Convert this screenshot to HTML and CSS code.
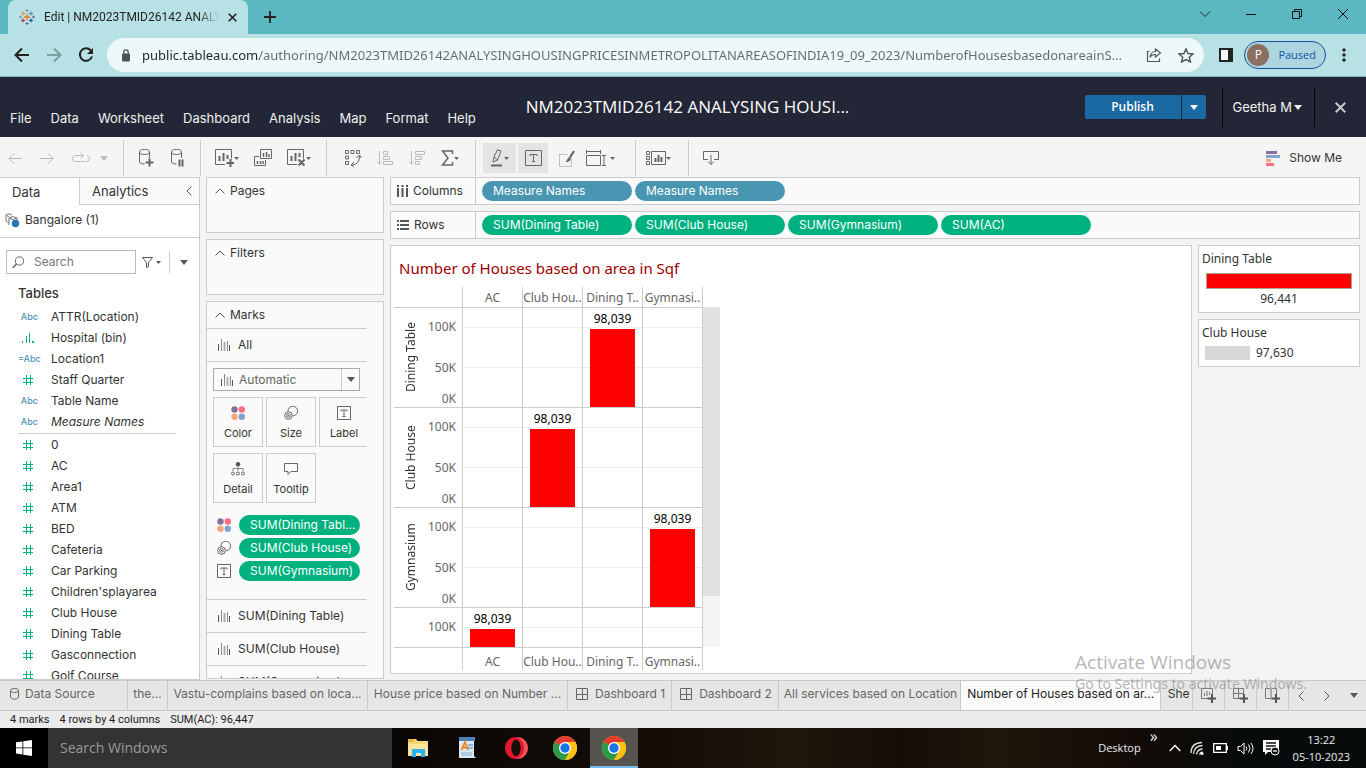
FILE: index.html
```html
<!DOCTYPE html>
<html lang="en">
<head>
<meta charset="utf-8">
<title>Edit | NM2023TMID26142 ANALYSING HOUSING PRICES</title>
<link rel="stylesheet" href="styles.css">
</head>
<body>
<svg class="defs" aria-hidden="true">
  <symbol id="hash" viewBox="0 0 12 12"><path d="M1 4.500h10M1 8.500h10M4.500 1v10M8.500 1v10" fill="none" stroke="#00b180"/></symbol>
  <symbol id="caret" viewBox="0 0 8 5"><path d="M0 0h8L4 5z" fill="currentColor"/></symbol>
  <symbol id="up" viewBox="0 0 10 6"><path d="M.5 5.500 5 1l4.500 4.500" fill="none" stroke="#555"/></symbol>
  <symbol id="bars" viewBox="0 0 14 12"><path d="M1.500 5v7M12.500 6v6" stroke="#555"/><path d="M4.500 0v12M10.500 2v10" stroke="#888"/><path d="M7.500 3v9" stroke="#aaa" stroke-width="2"/></symbol>
  <symbol id="dots" viewBox="0 0 14 14"><circle cx="3.500" cy="3.500" r="3.200" fill="#8a6f9b"/><circle cx="10.800" cy="3.500" r="3.200" fill="#fc6f81"/><circle cx="3.500" cy="10.800" r="3.200" fill="#f5a67b"/><circle cx="10.800" cy="10.800" r="3.200" fill="#81a4cd"/></symbol>
  <symbol id="size" viewBox="0 0 14 14"><g fill="none" stroke="#666"><path d="M4 5.500A4.800 4.800 0 1 1 9 9.800"/><circle cx="4.500" cy="9.500" r="3.800"/><circle cx="4.500" cy="9.500" r="1.800"/><path d="m3 8 3 3"/></g></symbol>
  <symbol id="tbox" viewBox="0 0 14 14"><path d="M.5.5h13v13H.5z" fill="none" stroke="#666"/><path d="M4 5.500V4h6v1.500M7 4v6M5.500 10.500h3" fill="none" stroke="#666"/></symbol>
  <symbol id="dash" viewBox="0 0 12 12"><path d="M.5.5h11v11H.5zM6.500.5v11M.5 6.500h11" fill="none" stroke="#666"/></symbol>
  <symbol id="chrome" viewBox="0 0 24 24"><circle cx="12" cy="12" r="12" fill="#fbc116"/><path d="M12 12 1.600 6A12 12 0 0 1 22.400 6z" fill="#e33b2e"/><path d="M12 12 1.600 6A12 12 0 0 0 12 24l5-9z" fill="#2a9b48"/><path d="M12 6h10.400A12 12 0 0 1 12 24l5.200-9z" fill="#fbc116"/><circle cx="12" cy="12" r="6" fill="#fff"/><circle cx="12" cy="12" r="4.700" fill="#1a73e8"/></symbol>
</svg>

<header class="browser">
  <div class="tabstrip">
    <div class="btab">
      <svg width="16" height="16" viewBox="0 0 16 16" fill="none"><path d="M8 5v6M5 8h6" stroke="#e8762d" stroke-width="1.300"/><path d="M4 2.500v4M2 4.500h4" stroke="#eb912c"/><path d="M12 2.500v4M10 4.500h4" stroke="#59879b"/><path d="M4 9.500v4M2 11.500h4" stroke="#c72035"/><path d="M12 9.500v4M10 11.500h4" stroke="#1f457e"/><path d="M8 0v3M6.500 1.500h3M1.500 6.500v3M0 8h3" stroke="#7199a6"/><path d="M8 13v3M6.500 14.500h3M14.500 6.500v3M13 8h3" stroke="#5b6591"/></svg>
      <span class="btab-title">Edit | NM2023TMID26142 ANALYSING</span>
      <button class="plain" aria-label="Close tab"><svg width="9" height="9" viewBox="0 0 9 9"><path d="m.7.7 7.600 7.600M8.300.7.7 8.300" stroke="#222" stroke-width="1.600"/></svg></button>
    </div>
    <button class="plain newtab" aria-label="New tab"><svg width="12" height="12" viewBox="0 0 12 12"><path d="M6 0v12M0 6h12" stroke="#222" stroke-width="1.800"/></svg></button>
    <div class="winctl">
      <button class="plain" aria-label="Search tabs"><svg width="12" height="12" viewBox="0 0 12 12"><path d="m1 3.500 5 5 5-5" fill="none" stroke="#222"/></svg></button>
      <button class="plain" aria-label="Minimize"><svg width="12" height="12" viewBox="0 0 12 12"><path d="M1 6.500h10" stroke="#111"/></svg></button>
      <button class="plain" aria-label="Restore"><svg width="12" height="12" viewBox="0 0 12 12"><path d="M1.500 3.500h7v7h-7zM3.500 3V1.500h7v7H9" fill="none" stroke="#111"/></svg></button>
      <button class="plain" aria-label="Close"><svg width="12" height="12" viewBox="0 0 12 12"><path d="m1 1 10 10M11 1 1 11" stroke="#111"/></svg></button>
    </div>
  </div>
  <div class="addressbar">
    <button class="plain" aria-label="Back"><svg width="16" height="16" viewBox="0 0 16 16"><path d="M15 8H2M8 1.500 1.500 8 8 14.500" fill="none" stroke="#222" stroke-width="2"/></svg></button>
    <button class="plain" aria-label="Forward"><svg width="16" height="16" viewBox="0 0 16 16"><path d="M1 8h13M8 1.500 14.500 8 8 14.500" fill="none" stroke="#7e9da0" stroke-width="2"/></svg></button>
    <button class="plain" aria-label="Reload"><svg width="16" height="16" viewBox="0 0 16 16"><path d="M12.800 3.500A6.200 6.200 0 1 0 14 9.500" fill="none" stroke="#222" stroke-width="2"/><path d="M15 1v6H9z" fill="#222"/></svg></button>
    <div class="url">
      <svg width="10" height="13" viewBox="0 0 10 13"><rect x="1" y="4.500" width="8" height="8" rx="1" fill="#4d5156"/><path d="M2.800 5V3a2.200 2.200 0 0 1 4.400 0v2" fill="none" stroke="#4d5156" stroke-width="1.300"/></svg>
      <input type="text" aria-label="Address" value="public.tableau.com/authoring/NM2023TMID26142ANALYSINGHOUSINGPRICESINMETROPOLITANAREASOFINDIA19_09_2023/NumberofHousesbasedonareainS...">
      <button class="plain" aria-label="Share"><svg width="16" height="14" viewBox="0 0 16 14"><path d="M3.500 3.500h-2v10h12v-3M9.500 1l5 4-5 4V6.500C7 6.500 5 7.500 4 9.500c.5-3.500 2.500-6 5.500-6z" fill="none" stroke="#555" stroke-width="1.200"/></svg></button>
      <button class="plain" aria-label="Bookmark"><svg width="16" height="15" viewBox="0 0 16 15"><path d="m8 1 2 4.500 5 .5-3.700 3.300L12.400 14 8 11.500 3.600 14l1.100-4.700L1 6l5-.5z" fill="none" stroke="#555" stroke-width="1.500"/></svg></button>
    </div>
    <button class="plain" aria-label="Side panel"><svg width="14" height="14" viewBox="0 0 14 14"><path d="M1 1h12v12H1z" fill="#edf8f9" stroke="#222" stroke-width="2"/><path d="M9 1h5v12H9z" fill="#222"/></svg></button>
    <button class="paused"><span class="avatar">P</span>Paused</button>
    <button class="plain" aria-label="Menu"><svg width="4" height="14" viewBox="0 0 4 14" fill="#222"><circle cx="2" cy="2" r="1.700"/><circle cx="2" cy="7" r="1.700"/><circle cx="2" cy="12" r="1.700"/></svg></button>
  </div>
</header>

<div class="appbar">
  <nav class="menu"><a href="#">File</a><a href="#">Data</a><a href="#">Worksheet</a><a href="#">Dashboard</a><a href="#">Analysis</a><a href="#">Map</a><a href="#">Format</a><a href="#">Help</a></nav>
  <h1>NM2023TMID26142 ANALYSING HOUSI...</h1>
  <div class="account">
    <button class="publish">Publish</button><button class="publish-more" aria-label="Publish options"><svg width="8" height="5"><use href="#caret"/></svg></button>
    <button class="user">Geetha M <svg width="8" height="5"><use href="#caret"/></svg></button>
    <button class="plain close" aria-label="Close"><svg width="11" height="11" viewBox="0 0 11 11"><path d="m.7.7 9.600 9.600M10.300.7.7 10.300" stroke="#c8c8cc" stroke-width="2"/></svg></button>
  </div>
</div>

<div class="tools">
  <div class="tg history">
    <button aria-label="Undo"><svg width="14" height="13" viewBox="0 0 14 13"><path d="M14 6.500H1M6.500 1 1 6.500 6.500 12"/></svg></button>
    <button aria-label="Redo"><svg width="14" height="13" viewBox="0 0 14 13"><path d="M0 6.500h13M7.500 1 13 6.500 7.500 12"/></svg></button>
    <button aria-label="Replay"><svg width="18" height="12" viewBox="0 0 18 12"><path d="M13 9.500H3.500a3 3 0 0 1 0-6H11M8.500.5l3 3-3 3M15 3.500a3 3 0 0 1-1 6"/></svg></button>
    <button aria-label="Replay options"><svg width="8" height="5"><use href="#caret"/></svg></button>
  </div>
  <div class="tg data">
    <button aria-label="New data source"><svg width="16" height="20" viewBox="0 0 16 20"><ellipse cx="6.500" cy="4" rx="5" ry="2.500"/><path d="M1.500 4v10.500q1 1.500 5 1.500M11.500 4v6"/><path d="M11.500 10.500v8M7.500 14.500h8" stroke-width="2"/></svg></button>
    <button aria-label="Pause updates"><svg width="16" height="20" viewBox="0 0 16 20"><ellipse cx="6.500" cy="4" rx="5" ry="2.500"/><path d="M1.500 4v10.500q1 1.500 5 1.500M11.500 4v6"/><path d="M9.500 11.500v7M12.500 11.500v7" stroke-width="2"/></svg></button>
  </div>
  <div class="tg sheet">
    <button aria-label="New worksheet"><svg width="19" height="18" viewBox="0 0 19 18"><path d="M10 15.500H.5V.5h16v9"/><path d="M4.500 7v5M8.500 4v8M12.500 6v4M15.500 10v8M11.500 14h8" stroke-width="2"/></svg><svg class="c" width="5" height="3"><use href="#caret"/></svg></button>
    <button aria-label="Duplicate"><svg width="18" height="18" viewBox="0 0 18 18"><path d="M6.500.5h11v9h-11zM5 7.500H.5v9h11V11"/><path d="M9.500 4v4M12.500 3v5M15 5v3M3.500 12v3M6.500 12v3M9 12v3" stroke-width="1.500"/></svg></button>
    <button aria-label="Clear sheet"><svg width="19" height="18" viewBox="0 0 19 18"><path d="M10 15.500H.5V.5h16v9"/><path d="M4.500 7v5M8.500 4v8M12.500 4v4m-1 2.500 6 6m0-6-6 6" stroke-width="2"/></svg><svg class="c" width="5" height="3"><use href="#caret"/></svg></button>
  </div>
  <div class="tg arrange">
    <button aria-label="Swap rows and columns"><svg width="17" height="18" viewBox="0 0 17 18"><path d="M.5 1.500h3v3h-3zM6 1.500h3v3H6zM11.500 1.500h3v3h-3zM.5 7h3v3h-3zM.5 12.500h3v3h-3zM6.500 16q8 0 8-9M9 13l-3 3 3 2M11.500 9l3-3 2 3"/></svg></button>
    <button class="off" aria-label="Sort ascending"><svg width="17" height="16" viewBox="0 0 17 16"><path d="M2.500 1v13M.5 11.500l2 3 2-3M6.500 1.500h4v3h-4zM6.500 6.500h6v3h-6zM6.500 11.500h9v3h-9z"/></svg></button>
    <button class="off" aria-label="Sort descending"><svg width="17" height="16" viewBox="0 0 17 16"><path d="M2.500 1v13M.5 11.500l2 3 2-3M6.500 1.500h9v3h-9zM6.500 6.500h6v3h-6zM6.500 11.500h4v3h-4z"/></svg></button>
    <button aria-label="Totals"><svg width="13" height="16" viewBox="0 0 13 16"><path d="M11.500 4V1h-10L7 8l-5.500 7h10v-3" stroke-width="1.500"/></svg><svg class="c" width="5" height="3"><use href="#caret"/></svg></button>
  </div>
  <div class="tg format">
    <button class="on" aria-label="Highlight"><svg width="14" height="18" viewBox="0 0 14 18"><path d="M7.500.8 11 2 7.500 11 3 13l1-5zM4 8l3.500 3"/><path d="M1 16.500h11" stroke-width="2"/></svg><svg class="c" width="5" height="3"><use href="#caret"/></svg></button>
    <button class="on" aria-label="Show mark labels"><svg width="17" height="16" viewBox="0 0 17 16"><path d="M.5.5h16v15H.5z"/><path d="M5 6V4.500h7V6M8.500 4.500V11M7 11.500h3"/></svg></button>
    <button aria-label="Format workbook"><svg width="16" height="17" viewBox="0 0 16 17"><path class="sel-area" d="M.5 4.500h8M.5 4.500v12h12V9"/><path d="m15 1-5 8" stroke-width="2.200"/><path d="m9.500 8-2 4 4-2z" fill="#666"/></svg></button>
    <button aria-label="Fit"><svg width="20" height="17" viewBox="0 0 20 17"><path d="M.5 0v4M14.500 0v4M.5 1.500h14M.5 5.500h14v10H.5zM16 5.500h4M16 15.500h4M18 5.500v10"/></svg><svg class="c" width="5" height="3"><use href="#caret"/></svg></button>
  </div>
  <div class="tg cards">
    <button aria-label="Show cards"><svg width="20" height="15" viewBox="0 0 20 15"><path d="M5.500.5h14v13h-14zM.5.5h3v3h-3zM.5 5.500h3v3h-3zM.5 10.500h3v3h-3z"/><path d="M9.500 7v4M12.500 4v7M15.500 6v5" stroke-width="2"/></svg><svg class="c" width="5" height="3"><use href="#caret"/></svg></button>
  </div>
  <div class="tg download">
    <button aria-label="Download"><svg width="16" height="16" viewBox="0 0 16 16"><path d="M5 9.500H.5v-8h15v8H11M8 5v9.500M5 11.500l3 3 3-3"/></svg></button>
  </div>
  <button class="showme"><svg width="14" height="15" viewBox="0 0 14 15"><path d="M0 0h11v3H0z" fill="#8a6f9b"/><path d="M0 4h14v3H0z" fill="#81a4cd"/><path d="M0 8h5v3H0z" fill="#f5a67b"/><path d="M0 12h8v3H0z" fill="#fc6f81"/></svg>Show Me</button>
</div>

<div class="workspace">
  <aside class="datapane">
    <div class="panetabs"><button class="sel">Data</button><button class="ana">Analytics <svg width="6" height="10" viewBox="0 0 6 10"><path d="M5.500.5 1 5l4.500 4.500" fill="none" stroke="#555"/></svg></button></div>
    <div class="source"><svg width="15" height="15" viewBox="0 0 15 15"><path d="M1 2v6q1 1.500 3 1.500M1 2q3-2.500 6 0M1 2q1.500 1.500 3 1.500M4 12V5q4-3 8 0v3M4 5q4 3 8 0" fill="none" stroke="#777"/><circle cx="10.500" cy="10.500" r="3.700" fill="#2277b5"/></svg>Bangalore (1)</div>
    <div class="searchrow">
      <label class="search"><svg width="13" height="13" viewBox="0 0 13 13"><circle cx="7.500" cy="5" r="4.200" fill="none" stroke="#666"/><path d="M4.500 8 .7 11.800" stroke="#666" stroke-width="1.500"/></svg><input type="text" placeholder="Search" aria-label="Search fields"></label>
      <button class="plain filter" aria-label="Filter fields"><svg width="11" height="11" viewBox="0 0 11 11"><path d="M.5.5h10L6.500 5.500v4l-2 1v-5z" fill="none" stroke="#555"/></svg><svg width="5" height="3"><use href="#caret"/></svg></button>
      <button class="plain view" aria-label="View options"><svg width="8" height="5"><use href="#caret"/></svg></button>
    </div>
    <h2>Tables</h2>
    <ul class="fields">
      <li><i class="abc">Abc</i>ATTR(Location)</li>
      <li><svg width="14" height="10" viewBox="0 0 14 10"><path d="M1.500 8v2M5.500 3v7M8.500 0v10M12.500 8v2M11.500 8v2" stroke="#00b180"/></svg>Hospital (bin)</li>
      <li><i class="abc">=Abc</i>Location1</li>
      <li><svg width="12" height="12"><use href="#hash"/></svg>Staff Quarter</li>
      <li><i class="abc">Abc</i>Table Name</li>
      <li class="it"><i class="abc">Abc</i>Measure Names</li>
    </ul>
    <ul class="fields measures">
      <li><svg width="12" height="12"><use href="#hash"/></svg>0</li>
      <li><svg width="12" height="12"><use href="#hash"/></svg>AC</li>
      <li><svg width="12" height="12"><use href="#hash"/></svg>Area1</li>
      <li><svg width="12" height="12"><use href="#hash"/></svg>ATM</li>
      <li><svg width="12" height="12"><use href="#hash"/></svg>BED</li>
      <li><svg width="12" height="12"><use href="#hash"/></svg>Cafeteria</li>
      <li><svg width="12" height="12"><use href="#hash"/></svg>Car Parking</li>
      <li><svg width="12" height="12"><use href="#hash"/></svg>Children'splayarea</li>
      <li><svg width="12" height="12"><use href="#hash"/></svg>Club House</li>
      <li><svg width="12" height="12"><use href="#hash"/></svg>Dining Table</li>
      <li><svg width="12" height="12"><use href="#hash"/></svg>Gasconnection</li>
      <li><svg width="12" height="12"><use href="#hash"/></svg>Golf Course</li>
    </ul>
  </aside>

  <div class="shelves">
    <section class="card"><h3><svg width="10" height="6"><use href="#up"/></svg>Pages</h3></section>
    <section class="card"><h3><svg width="10" height="6"><use href="#up"/></svg>Filters</h3></section>
    <section class="card marks">
      <h3><svg width="10" height="6"><use href="#up"/></svg>Marks</h3>
      <div class="marks-body">
        <div class="mrow"><svg width="14" height="12"><use href="#bars"/></svg>All</div>
        <div class="marktype"><svg class="lead" width="14" height="12"><use href="#bars"/></svg><select aria-label="Mark type"><option>Automatic</option></select><span class="drop"><svg width="8" height="5"><use href="#caret"/></svg></span></div>
        <div class="encodings">
          <button><svg width="14" height="14"><use href="#dots"/></svg>Color</button>
          <button><svg width="14" height="14"><use href="#size"/></svg>Size</button>
          <button><svg width="14" height="14"><use href="#tbox"/></svg>Label</button>
          <button><svg width="14" height="14" viewBox="0 0 14 14"><circle cx="7" cy="2.200" r="2.200" fill="#555"/><path d="M7 4v5M2 9V6.500h10V9" fill="none" stroke="#888"/><g fill="none" stroke="#666"><circle cx="2" cy="11.500" r="1.500"/><circle cx="7" cy="11.500" r="1.500"/><circle cx="12" cy="11.500" r="1.500"/></g></svg>Detail</button>
          <button><svg width="14" height="14" viewBox="0 0 14 14"><path d="M.5 1.500h13v8H7l-3 3v-3H.5z" fill="none" stroke="#666"/></svg>Tooltip</button>
        </div>
        <div class="encoded"><svg width="14" height="14"><use href="#dots"/></svg><button class="pill green">SUM(Dining Tabl...</button></div>
        <div class="encoded"><svg width="14" height="14"><use href="#size"/></svg><button class="pill green">SUM(Club House)</button></div>
        <div class="encoded"><svg width="14" height="14"><use href="#tbox"/></svg><button class="pill green">SUM(Gymnasium)</button></div>
        <div class="layers">
          <div class="mrow"><svg width="14" height="12"><use href="#bars"/></svg>SUM(Dining Table)</div>
          <div class="mrow"><svg width="14" height="12"><use href="#bars"/></svg>SUM(Club House)</div>
          <div class="mrow"><svg width="14" height="12"><use href="#bars"/></svg>SUM(Gymnasium)</div>
        </div>
      </div>
    </section>
  </div>

  <main>
    <div class="shelf"><span class="shelfname"><svg width="11" height="12" viewBox="0 0 11 12"><path d="M1 0v2M5.500 0v2M10 0v2M1 3v9M5.500 3v9M10 3v9" stroke="#555" stroke-width="2"/></svg>Columns</span>
      <button class="pill blue">Measure Names</button><button class="pill blue">Measure Names</button></div>
    <div class="shelf"><span class="shelfname"><svg width="12" height="11" viewBox="0 0 12 11"><path d="M0 1h2M0 5h2M0 9h2M3 1h9M3 5h9M3 9h9" stroke="#555" stroke-width="2"/></svg>Rows</span>
      <button class="pill green">SUM(Dining Table)</button><button class="pill green">SUM(Club House)</button><button class="pill green">SUM(Gymnasium)</button><button class="pill green">SUM(AC)</button></div>
    <div class="vizrow">
      <section class="viz">
        <h2>Number of Houses based on area in Sqf</h2>
        <div class="chart">
          <div class="plot">
            <div class="row head"><div></div><div>AC</div><div>Club Hou..</div><div>Dining T..</div><div>Gymnasi..</div></div>
            <div class="row"><div class="axis"><span class="rl">Dining Table</span><span class="ticks"><b>100K</b><b>50K</b><b>0K</b></span></div><div></div><div></div><div>98,039<i class="bar"></i></div><div></div></div>
            <div class="row"><div class="axis"><span class="rl">Club House</span><span class="ticks"><b>100K</b><b>50K</b><b>0K</b></span></div><div></div><div>98,039<i class="bar"></i></div><div></div><div></div></div>
            <div class="row"><div class="axis"><span class="rl">Gymnasium</span><span class="ticks"><b>100K</b><b>50K</b><b>0K</b></span></div><div></div><div></div><div></div><div>98,039<i class="bar"></i></div></div>
            <div class="row part"><div class="axis"><span class="ticks"><b>100K</b></span></div><div>98,039<i class="bar"></i></div><div></div><div></div><div></div></div>
            <div class="row foot"><div></div><div>AC</div><div>Club Hou..</div><div>Dining T..</div><div>Gymnasi..</div></div>
          </div>
          <div class="scroll"><div class="thumb"></div></div>
        </div>
      </section>
      <div class="legends">
        <section class="legend"><h4>Dining Table</h4><div class="ramp"></div><p>96,441</p></section>
        <section class="legend"><h4>Club House</h4><p class="sz"><i></i>97,630</p></section>
      </div>
    </div>
  </main>
</div>

<div class="sheets">
  <button class="ds"><svg width="9" height="12" viewBox="0 0 9 12"><ellipse cx="4.500" cy="2.500" rx="4" ry="2" fill="none" stroke="#666"/><path d="M.5 2.500v7q4 3.500 8 0v-7" fill="none" stroke="#666"/></svg>Data Source</button>
  <button class="cut">the...</button>
  <button class="wide">Vastu-complains based on loca...</button>
  <button class="wide">House price based on Number ...</button>
  <button><svg width="12" height="12"><use href="#dash"/></svg>Dashboard 1</button>
  <button><svg width="12" height="12"><use href="#dash"/></svg>Dashboard 2</button>
  <button class="snug">All services based on Location</button>
  <button class="wide active">Number of Houses based on ar...</button>
  <button class="she">She</button>
  <button class="new" aria-label="New worksheet"><svg width="15" height="15" viewBox="0 0 15 15"><path d="M7 10.500H.5V.5h11V6M3.500 5v3M6 3v5M8.500 4v3" fill="none" stroke="#777"/><path d="M11 6v9M6.500 10.500h8.500" stroke="#555" stroke-width="2"/></svg></button>
  <button class="new" aria-label="New dashboard"><svg width="15" height="15" viewBox="0 0 15 15"><path d="M7 10.500H.5V.5h10V6M5.500.5v10M.5 5.500h10" fill="none" stroke="#777"/><path d="M11 6v9M6.500 10.500h8.500" stroke="#555" stroke-width="2"/></svg></button>
  <button class="new" aria-label="New story"><svg width="15" height="15" viewBox="0 0 15 15"><path d="M6 11.500 5.500 10.500H.5V.5h4l1.500 1 1.500-1h4V6M6 1.500v9" fill="none" stroke="#777"/><path d="M11 6v9M6.500 10.500h8.500" stroke="#555" stroke-width="2"/></svg></button>
  <div class="pager">
    <button aria-label="Previous sheet"><svg width="6" height="10" viewBox="0 0 6 10"><path d="M5.500.5 1 5l4.500 4.500" fill="none" stroke="#555"/></svg></button>
    <button aria-label="Next sheet"><svg width="6" height="10" viewBox="0 0 6 10"><path d="M.5.500 5 5 .5 9.500" fill="none" stroke="#555"/></svg></button>
    <button aria-label="Sheet list"><svg width="8" height="5"><use href="#caret"/></svg></button>
  </div>
</div>
<div class="status"><span>4 marks</span><span>4 rows by 4 columns</span><span>SUM(AC): 96,447</span></div>

<footer class="taskbar">
  <button class="start" aria-label="Start"><svg width="16" height="16" viewBox="0 0 16 16" fill="#fff"><path d="M0 2.300 6.500 1.400v6.100H0zM7.300 1.300 16 0v7.500H7.300zM0 8.300h6.500v6.200L0 13.600zM7.300 8.300H16V16l-8.700-1.300z"/></svg></button>
  <input class="winsearch" type="text" placeholder="Search Windows" aria-label="Search Windows">
  <div class="apps">
    <button aria-label="File Explorer"><svg width="24" height="24" viewBox="0 0 24 24"><path d="M2 3h8l1.500 2H22v15H2z" fill="#f8d775"/><path d="M2 3h6v3H2z" fill="#e8b83a"/><path d="M22 5v15H2V8h18z" fill="#fde49a"/><path d="M6 21v-8h13v8h-4v-4h-5v4z" fill="#28b4f0"/></svg></button>
    <button aria-label="WordPad"><svg width="24" height="24" viewBox="0 0 24 24"><path d="M4 2h15v18l2 2H4z" fill="#d7e9f7"/><path d="M4 1h16v4H4z" fill="#4d80b4"/><path d="m6.500 14 3.500-8 3 8M8 11.500h4" fill="none" stroke="#f08424" stroke-width="1.800"/><path d="M13 9h5M13 12h5" stroke="#4e7fb0"/><path d="M6 17h11M6 19h11" stroke="#8ca7bf"/></svg></button>
    <button aria-label="Opera"><svg width="24" height="24" viewBox="0 0 24 24"><ellipse cx="12" cy="12" rx="11" ry="11" fill="#e2192c"/><path d="M13 1a11 11 0 0 1 0 22q7-4 7-11T13 1z" fill="#f55257"/><ellipse cx="12" cy="12" rx="4.700" ry="8.300" fill="#160e08"/></svg></button>
    <button aria-label="Chrome"><svg width="24" height="24"><use href="#chrome"/></svg></button>
    <button class="run" aria-label="Chrome window"><svg width="24" height="24"><use href="#chrome"/></svg></button>
  </div>
  <div class="tray">
    <span class="desk">Desktop</span><span class="more">»</span>
    <svg width="12" height="8" viewBox="0 0 12 8"><path d="m.7 7 5.300-5.500L11.300 7" fill="none" stroke="#fff" stroke-width="1.300"/></svg>
    <svg width="14" height="14" viewBox="0 0 14 14"><g fill="none" stroke="#ddd" stroke-width="1.300"><path d="M1 12Q1 2 12 1.500M3.500 13q.5-8 9-8.500M6.500 13.500q.5-5 6-5.500M9.500 13.500q.5-2 3-2.500"/></g><circle cx="12" cy="12.500" r="1.500" fill="#fff"/></svg>
    <svg width="15" height="10" viewBox="0 0 15 10"><path d="M.7.700h12.600v8.600H.7z" fill="none" stroke="#fff" stroke-width="1.300"/><path d="M3 3h5v4H3zM13 3h2v4h-2z" fill="#fff"/></svg>
    <svg width="17" height="13" viewBox="0 0 17 13"><path d="M1 4.500h2.500L7 1v11L3.500 8.500H1zM9 4.500q1.500 2 0 4M11.500 2.500q3 4 0 8M14 1q4 5.500 0 11" fill="none" stroke="#fff"/></svg>
    <svg width="17" height="16" viewBox="0 0 17 16"><path d="M0 0h16v12H5l-3 3v-3H0z" fill="#fff"/><path d="M3 3h10M3 6h10M3 9h5" stroke="#111" stroke-width="1.300"/><circle cx="12" cy="11" r="4" fill="#111" stroke="#fff"/><path d="M10 11h4" stroke="#fff" stroke-width="1.300"/></svg>
    <time>13:22<br>05-10-2023</time>
  </div>
</footer>
<div class="watermark"><strong>Activate Windows</strong><span>Go to Settings to activate Windows.</span></div>
</body>
</html>
```
FILE: styles.css
```css
* { box-sizing: border-box; }
body {
  margin: 0; height: 100vh; overflow: hidden; display: flex; flex-direction: column;
  font: 12px/16px Inter, "Liberation Sans", sans-serif; color: #333; background: #f3f3f3;
}
.defs { display: none; }
svg { flex: none; }
button { font: inherit; color: inherit; border: 0; background: none; padding: 0; margin: 0; display: flex; align-items: center; justify-content: center; }
input, select { font: inherit; color: inherit; border: 0; background: none; padding: 0; min-width: 0; outline: 0; }
h1, h2, h3, h4, p, ul { margin: 0; padding: 0; font-weight: 400; list-style: none; }
i, b { font-style: normal; font-weight: 400; }
a { color: inherit; text-decoration: none; }

/* Browser frame */
.browser { flex: none; font-family: "Open Sans", "Noto Sans", sans-serif; color: #222; }
.tabstrip { height: 34px; background: #5bb8c1; display: flex; padding-left: 8px; }
.btab { width: 240px; background: #b7e1e4; border-radius: 8px 8px 0 0; display: flex; align-items: center; gap: 9px; padding: 0 11px; }
.btab-title { flex: 1; font-family: Roboto, sans-serif; overflow: hidden; white-space: nowrap; -webkit-mask-image: linear-gradient(90deg, #000 88%, transparent); mask-image: linear-gradient(90deg, #000 88%, transparent); }
.newtab { width: 44px; }
.winctl { margin-left: auto; display: flex; align-items: center; height: 28px; }
.winctl button { width: 46px; }
.addressbar { height: 43px; background: #b7e1e4; border-bottom: 1px solid #8fb9bd; display: flex; align-items: center; gap: 16px; padding: 0 20px 0 14px; }
.url { flex: 1; height: 34px; border-radius: 17px; background: #edf8f9; display: flex; align-items: center; gap: 16px; padding: 0 10px 0 14px; margin-right: -1px; margin-left: -3px; }
.url input { flex: 1; font: 13px/24px "Noto Sans", sans-serif; margin-left: -5px; text-overflow: ellipsis; color: transparent; background: linear-gradient(90deg, #222 117px, #5f6b6d 117px); -webkit-background-clip: text; background-clip: text; height: 24px; }
.paused { height: 28px; border: 1px solid #1a50a0; border-radius: 14px; background: #abd6e0; color: #174ea6; font-size: 11px; gap: 9px; padding: 0 9px 0 2px; margin-left: -5px; }
.avatar { width: 22px; height: 22px; line-height: 22px; border-radius: 50%; background: #8d6e63; color: #fff; font-size: 12px; }

/* Application header */
.appbar { flex: none; height: 60px; background: #232636; color: #f0f0f0; display: grid; grid-template-columns: 1fr auto 1fr; font-size: 13px; }
.menu { align-self: end; display: flex; gap: 19px; padding: 0 0 11px 10px; }
.appbar h1 { font: 17px/60px "Open Sans", sans-serif; color: #fff; padding-left: 9px; }
.account { display: flex; align-items: center; justify-content: flex-end; }
.publish, .publish-more { height: 24px; background: #1b69a3; color: #fff; }
.publish { width: 96px; font: 600 12px/16px "Open Sans", sans-serif; border-radius: 2px 0 0 2px; }
.publish-more { width: 24px; margin-left: 1px; border-radius: 0 2px 2px 0; }
.user { height: 40px; margin-left: 16px; padding: 0 12px 0 10px; gap: 2px; border: solid #050508; border-width: 0 1px; }
.close { width: 51px; }

/* Command toolbar */
.tools { flex: none; height: 40px; padding-top: 2px; background: #f5f5f5; color: #666; display: flex; align-items: center; }
.tg { height: 36px; display: flex; align-items: center; border-right: 1px solid #ccc; }
.tg svg { fill: none; stroke: #666; }
.tg svg use { stroke: none; }
.tg svg.c { stroke: none; margin-left: -1px; }
.tg .off svg, .history svg { stroke: #bbb; color: #bbb; }
.tg button { height: 30px; gap: 1px; }
.history { padding: 0 15px 0 8px; gap: 18px; }
.history button:last-child { margin-left: -8px; }
.data { padding: 0 14px; gap: 16px; }
.sheet { padding: 0 15px 0 14px; gap: 15px; }
.arrange { padding: 0 16px 0 18px; gap: 15px; }
.format { padding: 0 20px 0 7px; gap: 2px; }
.format button:nth-child(1) { width: 33px; }
.format button:nth-child(2) { width: 30px; }
.format button:nth-child(3) { width: 33px; }
.format button:nth-child(4) { width: 30px; }
.format .on { background: #e4e4e4; }
.sel-area { stroke: #aaa; stroke-dasharray: 2 1; }
.cards { padding: 0 17px 0 10px; }
.cards .c, .format button:nth-child(4) .c { margin-left: 3px; }
.download { padding-left: 14px; border: 0; }
.showme { margin-left: auto; margin-right: 24px; gap: 9px; color: #333; }

/* Workspace columns */
.workspace { flex: 1; min-height: 0; display: grid; grid-template-columns: 200px 178px minmax(0, 1fr); gap: 6px; padding-right: 6px; }
.datapane { background: #fff; border: solid #ccc; border-width: 1px 1px 1px 0; overflow: hidden; }
.panetabs { display: flex; height: 27px; font-size: 13px; }
.panetabs .sel { width: 79px; justify-content: flex-start; padding-left: 12px; }
.panetabs .ana { flex: 1; justify-content: space-between; background: #fafafa; border: solid #ccc; border-width: 0 0 1px 1px; padding: 0 7px 0 12px; }
.source { height: 33px; border-bottom: 1px solid #ccc; display: flex; align-items: center; padding: 0 0 2px 5px; gap: 5px; }
.searchrow { display: flex; align-items: center; height: 24px; margin: 12px 6px 0; }
.search { width: 130px; height: 24px; border: 1px solid #bbb; display: flex; align-items: center; gap: 9px; padding-left: 5px; }
.search input { width: 90px; }
.search input::placeholder { color: #777; opacity: 1; }
.filter { gap: 3px; padding: 0 8px 0 6px; color: #555; }
.view { height: 22px; border-left: 1px solid #ccc; padding-left: 10px; color: #555; }
.datapane h2 { font: 500 13px/20px Inter, sans-serif; margin: 9px 0 3px 18px; }
.fields li { height: 21px; padding-left: 51px; display: flex; align-items: center; }
.fields li > svg { width: 14px; margin-left: -30px; margin-right: 16px; }
.fields li > i { margin-left: -33px; width: 20px; margin-right: 13px; }
.abc { font: 500 9px/16px Inter, sans-serif; color: #4a93b3; white-space: nowrap; text-align: right; }
.it { font-style: italic; }
.measures { padding-top: 2px; background: linear-gradient(#ccc, #ccc) 18px 1px / 158px 1px no-repeat; }

.shelves { display: flex; flex-direction: column; gap: 6px; min-height: 0; padding-bottom: 1px; }
.card { flex: none; height: 56px; background: #fafafa; border: 1px solid #ccc; }
.card h3 { font-size: 12px; line-height: 26px; padding-left: 8px; display: flex; align-items: center; gap: 5px; }
.marks { flex: 1; min-height: 0; overflow: hidden; }
.marks-body { width: 159px; overflow: hidden; border-top: 1px solid #ccc; }
.mrow { height: 33px; display: flex; align-items: center; gap: 7px; padding-left: 10px; border-bottom: 1px solid #ccc; white-space: nowrap; }
.marktype { position: relative; margin: 6px; height: 23px; border: 1px solid #aaa; color: #555; }
.marktype select { appearance: none; width: 100%; height: 100%; padding-left: 25px; color: #666; }
.marktype .lead { position: absolute; left: 6px; top: 5px; }
.drop { position: absolute; right: 0; top: 0; bottom: 0; width: 18px; border-left: 1px solid #ccc; display: flex; align-items: center; justify-content: center; pointer-events: none; }
.encodings { display: grid; grid-template-columns: repeat(3, 50px); gap: 6px 3px; padding-left: 6px; margin-bottom: 12px; font-size: 11px; }
.encodings button { height: 50px; border: 1px solid #ccc; flex-direction: column; gap: 5px; padding-top: 3px; }
.encoded { display: flex; align-items: center; gap: 8px; padding: 0 6px 0 10px; margin-bottom: 3px; }
.encoded .pill { flex: 1; width: auto; margin: 0; padding-left: 11px; }
.layers { border-top: 1px solid #ccc; margin-top: 18px; }

main { display: flex; flex-direction: column; gap: 6px; min-width: 0; min-height: 0; padding-bottom: 6px; }
.shelf { flex: none; height: 28px; background: #fafafa; border: 1px solid #ccc; display: flex; align-items: center; gap: 3px; }
.shelfname { width: 85px; height: 26px; border-right: 1px solid #ccc; margin-right: 3px; display: flex; align-items: center; gap: 5px; padding-left: 6px; }
.pill { width: 150px; height: 20px; border-radius: 10px; color: #fff; justify-content: flex-start; padding-left: 11px; white-space: nowrap; }
.blue { background: #4996b2; }
.green { background: #00b180; }

.vizrow { flex: 1; min-height: 0; display: grid; grid-template-columns: minmax(0, 1fr) 162px; gap: 6px; }
.viz { background: #fff; border: 1px solid #ccc; padding: 12px 3px; overflow: hidden; font: 12px/16px "Noto Sans", sans-serif; }
.viz h2 { font-size: 15px; line-height: 20px; color: #a00000; padding-left: 5px; margin-bottom: 9px; }
.chart { display: flex; color: #666; }
.row { display: grid; grid-template-columns: 69px repeat(4, 60px); height: 100px; border-bottom: 1px solid #ccc; }
.row > div { border-right: 1px solid #ccc; display: flex; flex-direction: column; align-items: center; padding-top: 3px; color: #000; white-space: nowrap; background: linear-gradient(#eee, #eee) 0 19px / 100% 1px no-repeat, linear-gradient(#eee, #eee) 0 59px / 100% 1px no-repeat; }
.row > .axis { flex-direction: row; background: none; padding: 0 6px 0 8px; justify-content: flex-end; color: #666; }
.rl { flex: 1; align-self: stretch; writing-mode: vertical-rl; transform: rotate(180deg); text-align: center; line-height: 18px; color: #333; }
.ticks { display: flex; flex-direction: column; text-align: right; align-self: flex-start; padding-top: 11px; }
.ticks b { height: 16px; }
.ticks b + b { margin-top: 25px; }
.ticks b + b + b { margin-top: 15px; }
.bar { display: block; width: 45px; flex: 1; background: #f00; margin-top: 2px; }
.part { height: 40px; }
.row.part > div { background-size: 100% 1px, 0 0; }
.row.part > .axis { background: none; }
.head, .foot { height: 21px; }
.row.head > div, .row.foot > div { background: none; color: #666; padding-top: 3px; }
.row.foot { border: 0; height: 22px; }
.row.foot > div { padding-top: 6px; }
.scroll { width: 17px; height: 340px; margin-top: 20px; background: #f5f5f5; }
.thumb { height: 85%; background: #e1e1e1; }

.legends { display: flex; flex-direction: column; gap: 6px; font: 12px/16px "Noto Sans", sans-serif; }
.legend { background: #fff; border: 1px solid #ccc; padding: 5px 3px; }
.legend p { text-align: center; }
.ramp { height: 16px; margin: 6px 4px 2px; border: 1px solid #aaa390; background: #f00; }
.legend .sz { display: flex; align-items: center; gap: 6px; padding-left: 3px; margin-top: 4px; }
.sz i { width: 45px; height: 14px; background: #d8d8d8; }

/* Sheet tabs and status */
.sheets { flex: none; height: 31px; border: solid #c8c8c8; border-width: 1px 0; background: #e6e6e6; display: flex; color: #666; }
.sheets > button { flex: none; border-right: 1px solid #c8c8c8; gap: 7px; padding: 0 6px 3px 8px; white-space: nowrap; }
.sheets .ds { width: 128px; justify-content: flex-start; padding-left: 10px; gap: 6px; }
.sheets .cut { width: 40px; padding: 0 0 3px; }
.sheets .wide { width: 200px; padding: 0 0 3px; }
.sheets .snug { padding: 0 3px 3px 5px; }
.sheets .active { background: #fafafa; color: #222; }
.sheets .she { width: 32px; padding: 0 0 3px 4px; color: #333; overflow: hidden; }
.sheets .new { width: 32px; padding: 0; }
.pager { flex: 1; display: flex; align-items: center; justify-content: space-between; padding: 0 8px 0 9px; color: #555; }
.status { flex: none; height: 17px; background: #ebebeb; font: 11px/17px Roboto, sans-serif; display: flex; gap: 10px; padding-left: 10px; color: #222; }

/* Taskbar */
.taskbar { flex: none; height: 40px; display: flex; color: #eee; font-family: "Open Sans", sans-serif; background: linear-gradient(90deg, #0a0705 30%, #140d07 48%, #20170b 58%, #150d07 66%, #20160a 73%, #140c07 82%, #070b0b 92%); }
.start { width: 48px; background: #000; }
.winsearch { width: 344px; background: #333; padding-left: 12px; font-size: 14px; }
.winsearch::placeholder { color: #9a9a9a; opacity: 1; }
.apps { display: flex; gap: 1px; margin-left: 2px; }
.apps button { width: 48px; height: 40px; }
.apps .run { background: #57534e; border-bottom: 2px solid #76b9ed; padding-top: 2px; }
.tray { margin-left: auto; display: flex; align-items: center; gap: 9px; padding-right: 16px; white-space: nowrap; font-size: 11px; }
.more { align-self: flex-start; font-size: 16px; margin-right: 2px; }
.tray time { text-align: center; line-height: 17px; margin-left: 4px; }

.watermark { position: absolute; right: 59px; bottom: 74px; color: rgba(140, 140, 140, .65); font-family: "Noto Sans", sans-serif; display: flex; flex-direction: column; pointer-events: none; }
.watermark strong { font: 400 19px/24px "Open Sans", sans-serif; }
.watermark span { font-size: 14px; line-height: 20px; }
```
